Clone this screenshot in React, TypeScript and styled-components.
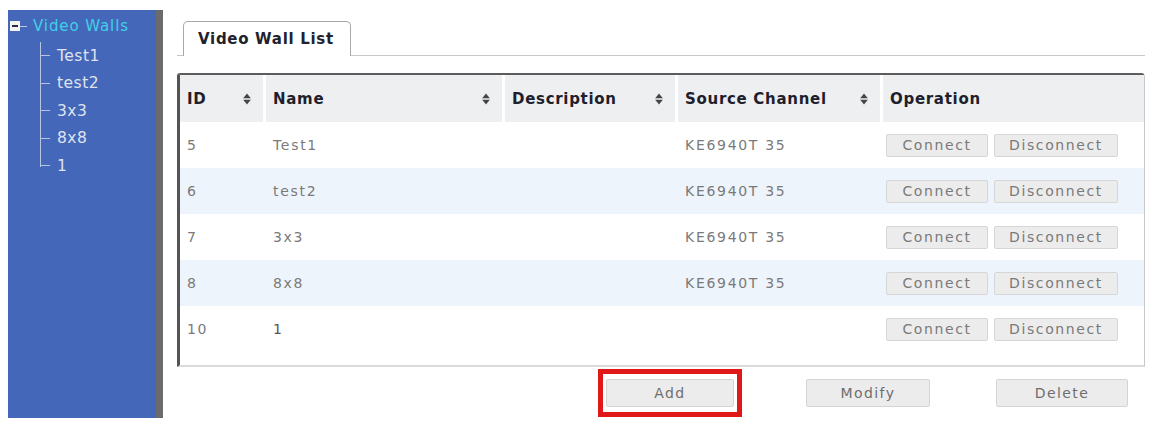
import styled, { createGlobalStyle } from "styled-components";

const GlobalStyle = createGlobalStyle`
  body {
    margin: 0;
    background: #ffffff;
    font-family: "DejaVu Sans", Verdana, sans-serif;
  }
`;

const Page = styled.div`
  display: flex;
  align-items: flex-start;
  padding: 10px 0 0 8px;
  height: 424px;
  box-sizing: border-box;
`;

const Sidebar = styled.div`
  width: 148px;
  height: 398px;
  background: #4567ba;
  border-right: 7px solid #6b6b6b;
  padding-top: 10px;
  box-sizing: content-box;
  flex-shrink: 0;
`;

const RootNode = styled.div`
  display: flex;
  align-items: center;
  height: 12px;
  padding-left: 2px;
`;

const MinusBox = styled.span`
  width: 10px;
  height: 10px;
  background: #f4f4f4;
  display: flex;
  align-items: center;
  justify-content: center;
  &::after {
    content: "";
    width: 6px;
    height: 2px;
    background: #2a2a40;
  }
`;

const RootStub = styled.span`
  width: 7px;
  height: 1px;
  background: #b8c4e4;
  margin-right: 6px;
`;

const RootLabel = styled.span`
  color: #42cfe8;
  font-size: 15px;
  letter-spacing: 0.9px;
`;

const Children = styled.div`
  margin: 10px 0 0 32px;
  position: relative;
  &::before {
    content: "";
    position: absolute;
    left: 0;
    top: 0;
    height: 125px;
    width: 1px;
    background: #b8c4e4;
  }
`;

const Child = styled.div`
  display: flex;
  align-items: center;
  height: 27.5px;
  color: #dfe3ee;
  font-size: 15.5px;
  letter-spacing: 0.5px;
  &::before {
    content: "";
    width: 10px;
    height: 1px;
    background: #b8c4e4;
    margin-right: 7px;
  }
`;

const Main = styled.div`
  margin-left: 14px;
  width: 968px;
  padding-top: 11px;
`;

const TabBar = styled.div`
  display: flex;
  border-bottom: 1px solid #c8c8c8;
  padding-left: 6px;
`;

const Tab = styled.div`
  width: 168px;
  height: 35px;
  box-sizing: border-box;
  border: 1px solid #a9a9a9;
  border-bottom: none;
  border-radius: 5px 5px 0 0;
  background: #fff;
  margin-bottom: -1px;
  padding-left: 14px;
  display: flex;
  align-items: center;
  font-weight: bold;
  font-size: 15px;
  letter-spacing: 0.7px;
  color: #22222e;
`;

const Table = styled.div`
  margin-top: 17px;
  border-top: 2px solid #5c5c5c;
  border-left: 3px solid #545454;
  border-right: 1px solid #c9c9c9;
  border-bottom: 2px solid #dadada;
  border-radius: 3px 4px 0 0;
  padding-bottom: 13px;
`;

const cols = "83px 236px 170px 202px 1fr";

const HeadRow = styled.div`
  display: grid;
  grid-template-columns: ${cols};
  column-gap: 3px;
  height: 47px;
`;

const HeadCell = styled.div`
  background: #edeff1;
  display: flex;
  align-items: center;
  justify-content: space-between;
  padding: 0 12px 0 7px;
  font-weight: bold;
  font-size: 15px;
  letter-spacing: 0.7px;
  color: #1e1e2c;
`;

const Row = styled.div<{ $alt: boolean }>`
  display: grid;
  grid-template-columns: ${cols};
  column-gap: 3px;
  height: 46px;
  align-items: center;
  background: ${(p) => (p.$alt ? "#eef4fb" : "#ffffff")};
`;

const Cell = styled.div<{ $dark?: boolean }>`
  padding-left: 7px;
  font-size: 14px;
  letter-spacing: 1.7px;
  color: ${(p) => (p.$dark ? "#555" : "#7a7a7a")};
`;

const Ops = styled.div`
  display: flex;
  gap: 6px;
  padding-left: 3px;
`;

const SmallButton = styled.button<{ $w: number }>`
  width: ${(p) => p.$w}px;
  height: 23px;
  padding: 0;
  background: #ececec;
  border: 1px solid #d6d6d6;
  border-radius: 2px;
  font-family: "DejaVu Sans", Verdana, sans-serif;
  font-size: 14px;
  letter-spacing: 1.6px;
  color: #7a7a7a;
`;

const BottomBar = styled.div`
  display: flex;
  align-items: center;
  margin-top: 2px;
  padding-left: 421px;
`;

const Highlight = styled.div`
  border: 5px solid #e01818;
  padding: 5px 3px;
`;

const BigButton = styled.button<{ $w: number; $gap?: number }>`
  width: ${(p) => p.$w}px;
  height: 28px;
  margin-left: ${(p) => p.$gap ?? 0}px;
  padding: 0;
  background: #ececec;
  border: 1px solid #d4d4d4;
  border-radius: 2px;
  font-family: "DejaVu Sans", Verdana, sans-serif;
  font-size: 14px;
  letter-spacing: 1.4px;
  color: #6e6e6e;
`;

function SortIcon() {
  return (
    <svg width="8" height="12" viewBox="0 0 8 12">
      <path d="M4 0.5 L7.8 5.2 L0.2 5.2 Z" fill="#454545" />
      <path d="M4 11.5 L7.8 6.8 L0.2 6.8 Z" fill="#454545" />
    </svg>
  );
}

const walls = [
  { id: "5", name: "Test1", source: "KE6940T 35" },
  { id: "6", name: "test2", source: "KE6940T 35" },
  { id: "7", name: "3x3", source: "KE6940T 35" },
  { id: "8", name: "8x8", source: "KE6940T 35" },
  { id: "10", name: "1", source: "" },
];

export default function App() {
  return (
    <>
      <GlobalStyle />
      <Page>
        <Sidebar>
          <RootNode>
            <MinusBox />
            <RootStub />
            <RootLabel>Video Walls</RootLabel>
          </RootNode>
          <Children>
            {walls.map((w) => (
              <Child key={w.id}>{w.name}</Child>
            ))}
          </Children>
        </Sidebar>
        <Main>
          <TabBar>
            <Tab>Video Wall List</Tab>
          </TabBar>
          <Table>
            <HeadRow>
              <HeadCell>ID <SortIcon /></HeadCell>
              <HeadCell>Name <SortIcon /></HeadCell>
              <HeadCell>Description <SortIcon /></HeadCell>
              <HeadCell>Source Channel <SortIcon /></HeadCell>
              <HeadCell>Operation</HeadCell>
            </HeadRow>
            {walls.map((w, i) => (
              <Row key={w.id} $alt={i % 2 === 1}>
                <Cell>{w.id}</Cell>
                <Cell $dark={w.name === "1"}>{w.name}</Cell>
                <Cell />
                <Cell>{w.source}</Cell>
                <Ops>
                  <SmallButton $w={102}>Connect</SmallButton>
                  <SmallButton $w={124}>Disconnect</SmallButton>
                </Ops>
              </Row>
            ))}
          </Table>
          <BottomBar>
            <Highlight>
              <BigButton $w={128}>Add</BigButton>
            </Highlight>
            <BigButton $w={124} $gap={64}>Modify</BigButton>
            <BigButton $w={132} $gap={66}>Delete</BigButton>
          </BottomBar>
        </Main>
      </Page>
    </>
  );
}
